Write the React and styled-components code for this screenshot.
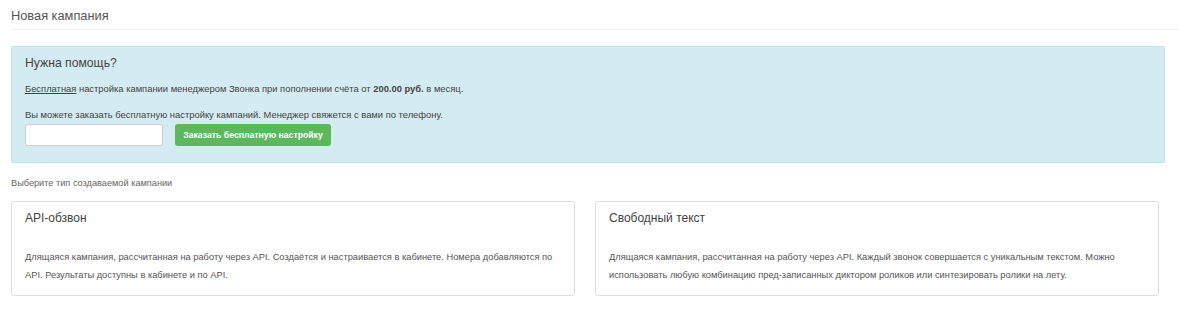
import React from "react";
import styled, { createGlobalStyle } from "styled-components";

const Global = createGlobalStyle`
  html, body { margin: 0; padding: 0; background: #fff; }
  body { font-family: "Liberation Sans", Arial, sans-serif; color: #555; }
`;

const Page = styled.div`
  padding: 0 0 0 11px;
`;

const Header = styled.h1`
  margin: 0;
  padding: 8px 0 0;
  font-size: 12.8px;
  font-weight: normal;
  color: #555;
  line-height: 16px;
  height: 21px;
  border-bottom: 1px solid #eee;
`;

const Content = styled.div`
  width: 1154px;
  padding-top: 16px;
`;

const Alert = styled.div`
  background: #d4ebf2;
  border: 1px solid #bde3ec;
  border-radius: 2px;
  padding: 8px 13px 17px;
  height: 117px;
  box-sizing: border-box;
`;

const AlertTitle = styled.h4`
  margin: 0;
  font-size: 12.2px;
  font-weight: normal;
  color: #444;
  line-height: 16px;
`;

const Text = styled.p`
  margin: ${p => p.$mt || 0}px 0 0;
  font-size: 9.4px;
  line-height: 12px;
  color: #444;
  b { font-weight: bold; }
  u { text-decoration: underline; }
`;

const Form = styled.div`
  display: flex;
  gap: 12px;
  margin-top: 3px;
`;

const Input = styled.input`
  width: 138px;
  height: 22px;
  box-sizing: border-box;
  border: 1px solid #ccc;
  border-radius: 3px;
  background: #fff;
  outline: none;
`;

const Button = styled.button`
  height: 22px;
  width: 156px;
  padding: 0;
  border: none;
  border-radius: 3px;
  background: #5cb85c;
  color: #fff;
  font-family: "Liberation Sans", Arial, sans-serif;
  font-weight: bold;
  font-size: 8.7px;
  cursor: pointer;
`;

const Label = styled.div`
  margin-top: 14px;
  font-size: 9.2px;
  color: #666;
  line-height: 12px;
`;

const Grid = styled.div`
  display: grid;
  grid-template-columns: 564px 564px;
  gap: 20px;
  margin-top: 12px;
`;

const Card = styled.div`
  border: 1px solid #ddd;
  border-radius: 3px;
  height: 95px;
  box-sizing: border-box;
  padding: 9px 13px;
`;

const CardTitle = styled.div`
  font-size: 12px;
  color: #444;
  line-height: 15px;
`;

const CardText = styled.p`
  margin: 22px 0 0;
  font-size: 9.3px;
  line-height: 18px;
  color: #555;
`;

const cards = [
  {
    title: "API-обзвон",
    text: "Длящаяся кампания, рассчитанная на работу через API. Создаётся и настраивается в кабинете. Номера добавляются по API. Результаты доступны в кабинете и по API.",
  },
  {
    title: "Свободный текст",
    text: "Длящаяся кампания, рассчитанная на работу через API. Каждый звонок совершается с уникальным текстом. Можно использовать любую комбинацию пред-записанных диктором роликов или синтезировать ролики на лету.",
  },
];

export default function App() {
  return (
    <Page>
      <Global />
      <Header>Новая кампания</Header>
      <Content>
        <Alert>
          <AlertTitle>Нужна помощь?</AlertTitle>
          <Text $mt={12}>
            <u>Бесплатная</u> настройка кампании менеджером Звонка при пополнении счёта от <b>200.00 руб.</b> в месяц.
          </Text>
          <Text $mt={14}>
            Вы можете заказать бесплатную настройку кампаний. Менеджер свяжется с вами по телефону.
          </Text>
          <Form>
            <Input type="text" />
            <Button>Заказать бесплатную настройку</Button>
          </Form>
        </Alert>
        <Label>Выберите тип создаваемой кампании</Label>
        <Grid>
          {cards.map(c => (
            <Card key={c.title}>
              <CardTitle>{c.title}</CardTitle>
              <CardText>{c.text}</CardText>
            </Card>
          ))}
        </Grid>
      </Content>
    </Page>
  );
}
